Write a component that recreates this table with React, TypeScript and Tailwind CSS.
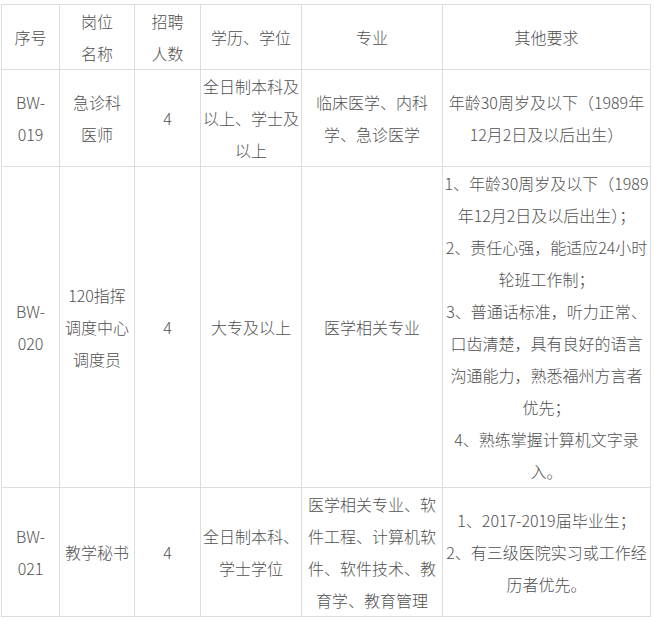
import React from 'react';

type Row = {
  no: string[];
  post: string[];
  count: string;
  edu: string[];
  major: string[];
  other: string[];
};

const rows: Row[] = [
  {
    no: ['BW-', '019'],
    post: ['急诊科', '医师'],
    count: '4',
    edu: ['全日制本科及', '以上、学士及', '以上'],
    major: ['临床医学、内科', '学、急诊医学'],
    other: ['年龄30周岁及以下（1989年', '12月2日及以后出生）'],
  },
  {
    no: ['BW-', '020'],
    post: ['120指挥', '调度中心', '调度员'],
    count: '4',
    edu: ['大专及以上'],
    major: ['医学相关专业'],
    other: [
      '1、年龄30周岁及以下（1989',
      '年12月2日及以后出生）；',
      '2、责任心强，能适应24小时',
      '轮班工作制；',
      '3、普通话标准，听力正常、',
      '口齿清楚，具有良好的语言',
      '沟通能力，熟悉福州方言者',
      '优先；',
      '4、熟练掌握计算机文字录',
      '入。',
    ],
  },
  {
    no: ['BW-', '021'],
    post: ['教学秘书'],
    count: '4',
    edu: ['全日制本科、', '学士学位'],
    major: ['医学相关专业、软', '件工程、计算机软', '件、软件技术、教', '育学、教育管理'],
    other: ['1、2017-2019届毕业生；', '2、有三级医院实习或工作经', '历者优先。'],
  },
];

const cell = 'border border-[#dddddd] p-0 text-center align-middle';

function Lines({ lines }: { lines: string[] }) {
  return (
    <>
      {lines.map((l, i) => (
        <span key={i} className="block whitespace-nowrap">
          {l}
        </span>
      ))}
    </>
  );
}

export default function App() {
  return (
    <div
      className="w-[655px] h-[619px] bg-white pt-[4px] pl-[1px] text-[16px] leading-[32px] font-light text-[#505050]"
      style={{ fontFamily: '"Noto Sans CJK SC", "Noto Sans", sans-serif' }}
    >
      <table className="table-fixed border-collapse w-[649px]">
        <colgroup>
          <col className="w-[58px]" />
          <col className="w-[75px]" />
          <col className="w-[66px]" />
          <col className="w-[101px]" />
          <col className="w-[141px]" />
          <col className="w-[208px]" />
        </colgroup>
        <thead>
          <tr className="h-[65px]">
            <td className={cell}>序号</td>
            <td className={cell}>
              <Lines lines={['岗位', '名称']} />
            </td>
            <td className={cell}>
              <Lines lines={['招聘', '人数']} />
            </td>
            <td className={cell}>学历、学位</td>
            <td className={cell}>专业</td>
            <td className={cell}>其他要求</td>
          </tr>
        </thead>
        <tbody>
          {rows.map((r) => (
            <tr key={r.no[1]}>
              <td className={cell}>
                <Lines lines={r.no} />
              </td>
              <td className={cell}>
                <Lines lines={r.post} />
              </td>
              <td className={cell}>{r.count}</td>
              <td className={cell}>
                <Lines lines={r.edu} />
              </td>
              <td className={cell}>
                <Lines lines={r.major} />
              </td>
              <td className={cell}>
                <Lines lines={r.other} />
              </td>
            </tr>
          ))}
        </tbody>
      </table>
    </div>
  );
}
